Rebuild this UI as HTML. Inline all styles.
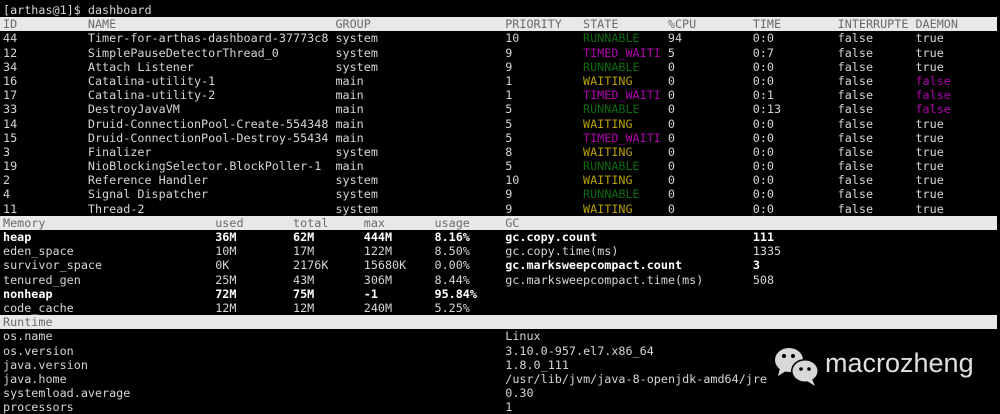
<!DOCTYPE html>
<html><head><meta charset="utf-8"><style>
body{margin:0;width:1000px;height:414px;background:#000;overflow:hidden;position:relative}
#t{position:absolute;left:3px;top:3px;font-family:"DejaVu Sans Mono","Liberation Mono",monospace;font-size:11.76px;line-height:14.2px;color:#d6d6d6}
.l{height:14.2px;width:1000px;white-space:nowrap;overflow:hidden}
.l span{display:inline-block;overflow:hidden;vertical-align:top;white-space:pre}
.bar{background:#e8e8e8;color:#6a6a6a;margin-left:-3px;padding-left:3px;width:994px}
.b{font-weight:bold;color:#fff}
.g{color:#0d6a0d}.p{color:#b000b0}.y{color:#b8a000}.m{color:#b000b0}
.w1{width:12ch}.w2{width:35ch}.w3{width:24ch}.w4{width:11ch}.w5{width:12ch}
.m1{width:30ch}.m2{width:11ch}.m3{width:10ch}.r1{width:71ch}
</style></head><body>
<div id="t">
<div class="l">[arthas@1]$ dashboard</div>
<div class="l bar"><span class="w1">ID</span><span class="w2">NAME</span><span class="w3">GROUP</span><span class="w4">PRIORITY</span><span class="w5">STATE</span><span class="w5">%CPU</span><span class="w5">TIME</span><span class="w4">INTERRUPTE</span><span>DAEMON</span></div>
<div class="l"><span class="w1">44</span><span class="w2">Timer-for-arthas-dashboard-37773c8</span><span class="w3">system</span><span class="w4">10</span><span class="w5 g">RUNNABLE</span><span class="w5">94</span><span class="w5">0:0</span><span class="w4">false</span><span>true</span></div>
<div class="l"><span class="w1">12</span><span class="w2">SimplePauseDetectorThread_0</span><span class="w3">system</span><span class="w4">9</span><span class="w5 p">TIMED_WAITI</span><span class="w5">5</span><span class="w5">0:7</span><span class="w4">false</span><span>true</span></div>
<div class="l"><span class="w1">34</span><span class="w2">Attach Listener</span><span class="w3">system</span><span class="w4">9</span><span class="w5 g">RUNNABLE</span><span class="w5">0</span><span class="w5">0:0</span><span class="w4">false</span><span>true</span></div>
<div class="l"><span class="w1">16</span><span class="w2">Catalina-utility-1</span><span class="w3">main</span><span class="w4">1</span><span class="w5 y">WAITING</span><span class="w5">0</span><span class="w5">0:0</span><span class="w4">false</span><span class="m">false</span></div>
<div class="l"><span class="w1">17</span><span class="w2">Catalina-utility-2</span><span class="w3">main</span><span class="w4">1</span><span class="w5 p">TIMED_WAITI</span><span class="w5">0</span><span class="w5">0:1</span><span class="w4">false</span><span class="m">false</span></div>
<div class="l"><span class="w1">33</span><span class="w2">DestroyJavaVM</span><span class="w3">main</span><span class="w4">5</span><span class="w5 g">RUNNABLE</span><span class="w5">0</span><span class="w5">0:13</span><span class="w4">false</span><span class="m">false</span></div>
<div class="l"><span class="w1">14</span><span class="w2">Druid-ConnectionPool-Create-554348</span><span class="w3">main</span><span class="w4">5</span><span class="w5 y">WAITING</span><span class="w5">0</span><span class="w5">0:0</span><span class="w4">false</span><span>true</span></div>
<div class="l"><span class="w1">15</span><span class="w2">Druid-ConnectionPool-Destroy-55434</span><span class="w3">main</span><span class="w4">5</span><span class="w5 p">TIMED_WAITI</span><span class="w5">0</span><span class="w5">0:0</span><span class="w4">false</span><span>true</span></div>
<div class="l"><span class="w1">3</span><span class="w2">Finalizer</span><span class="w3">system</span><span class="w4">8</span><span class="w5 y">WAITING</span><span class="w5">0</span><span class="w5">0:0</span><span class="w4">false</span><span>true</span></div>
<div class="l"><span class="w1">19</span><span class="w2">NioBlockingSelector.BlockPoller-1</span><span class="w3">main</span><span class="w4">5</span><span class="w5 g">RUNNABLE</span><span class="w5">0</span><span class="w5">0:0</span><span class="w4">false</span><span>true</span></div>
<div class="l"><span class="w1">2</span><span class="w2">Reference Handler</span><span class="w3">system</span><span class="w4">10</span><span class="w5 y">WAITING</span><span class="w5">0</span><span class="w5">0:0</span><span class="w4">false</span><span>true</span></div>
<div class="l"><span class="w1">4</span><span class="w2">Signal Dispatcher</span><span class="w3">system</span><span class="w4">9</span><span class="w5 g">RUNNABLE</span><span class="w5">0</span><span class="w5">0:0</span><span class="w4">false</span><span>true</span></div>
<div class="l"><span class="w1">11</span><span class="w2">Thread-2</span><span class="w3">system</span><span class="w4">9</span><span class="w5 y">WAITING</span><span class="w5">0</span><span class="w5">0:0</span><span class="w4">false</span><span>true</span></div>
<div class="l bar"><span class="m1">Memory</span><span class="m2">used</span><span class="m3">total</span><span class="m3">max</span><span class="m3">usage</span><span>GC</span></div>
<div class="l b"><span class="m1">heap</span><span class="m2">36M</span><span class="m3">62M</span><span class="m3">444M</span><span class="m3">8.16%</span><span class="w2">gc.copy.count</span><span>111</span></div>
<div class="l"><span class="m1">eden_space</span><span class="m2">10M</span><span class="m3">17M</span><span class="m3">122M</span><span class="m3">8.50%</span><span class="w2">gc.copy.time(ms)</span><span>1335</span></div>
<div class="l"><span class="m1">survivor_space</span><span class="m2">0K</span><span class="m3">2176K</span><span class="m3">15680K</span><span class="m3">0.00%</span><span class="w2 b">gc.marksweepcompact.count</span><span class="b">3</span></div>
<div class="l"><span class="m1">tenured_gen</span><span class="m2">25M</span><span class="m3">43M</span><span class="m3">306M</span><span class="m3">8.44%</span><span class="w2">gc.marksweepcompact.time(ms)</span><span>508</span></div>
<div class="l b"><span class="m1">nonheap</span><span class="m2">72M</span><span class="m3">75M</span><span class="m3">-1</span><span class="m3">95.84%</span></div>
<div class="l"><span class="m1">code_cache</span><span class="m2">12M</span><span class="m3">12M</span><span class="m3">240M</span><span class="m3">5.25%</span></div>
<div class="l bar">Runtime</div>
<div class="l"><span class="r1">os.name</span><span>Linux</span></div>
<div class="l"><span class="r1">os.version</span><span>3.10.0-957.el7.x86_64</span></div>
<div class="l"><span class="r1">java.version</span><span>1.8.0_111</span></div>
<div class="l"><span class="r1">java.home</span><span>/usr/lib/jvm/java-8-openjdk-amd64/jre</span></div>
<div class="l"><span class="r1">systemload.average</span><span>0.30</span></div>
<div class="l"><span class="r1">processors</span><span>1</span></div>
</div>
<svg style="position:absolute;left:774px;top:346px" width="46" height="42" viewBox="0 0 46 42">
<ellipse cx="15" cy="14" rx="14" ry="12" fill="#d8d8d8"/>
<path d="M6 22 L4 30 L12 25 Z" fill="#d8d8d8"/>
<circle cx="10" cy="10" r="2" fill="#000"/><circle cx="19" cy="10" r="2" fill="#000"/>
<ellipse cx="31" cy="25" rx="14" ry="12" fill="#000"/>
<ellipse cx="31" cy="25" rx="12.5" ry="10.5" fill="#d8d8d8"/>
<path d="M38 33 L41 40 L33 35 Z" fill="#d8d8d8"/>
<circle cx="27" cy="23" r="1.8" fill="#000"/><circle cx="35" cy="23" r="1.8" fill="#000"/>
</svg>
<div style="position:absolute;left:825px;top:348px;font-family:'Liberation Sans',sans-serif;font-size:27px;color:#e0e0e0">macrozheng</div>
</body></html>
